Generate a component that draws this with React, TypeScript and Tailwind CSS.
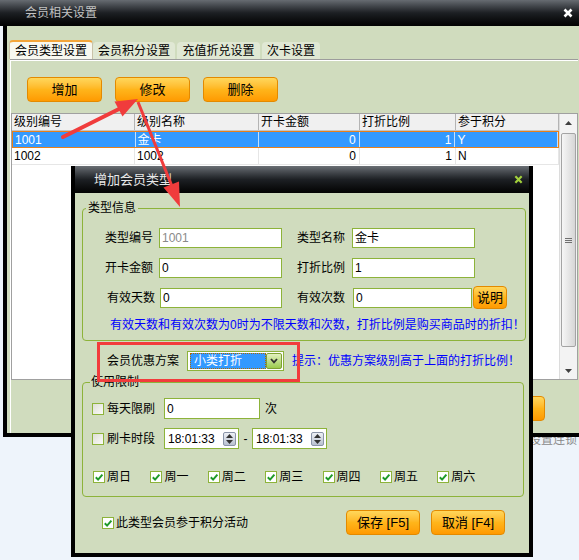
import React from 'react';

type Kids = { children?: React.ReactNode; className?: string };

function OrangeBtn({ children, className = '' }: Kids) {
  return (
    <button
      className={`flex shrink-0 items-center justify-center rounded-[4px] border border-[#e38a00] bg-linear-to-b from-[#ffd75a] via-[#ffb51a] to-[#ff9a00] text-[13px] leading-none text-black ${className}`}
    >
      {children}
    </button>
  );
}

function Check({ checked = false }: { checked?: boolean }) {
  return (
    <span
      className={`flex h-[12px] w-[12px] shrink-0 items-center justify-center border border-[#8db33a] ${
        checked ? 'bg-white' : 'bg-linear-to-br from-[#dedfd6] to-[#fbfbf8]'
      }`}
    >
      {checked && (
        <svg viewBox="0 0 10 10" className="h-[10px] w-[10px]">
          <path d="M1.8 5.2 L4.1 7.6 L8.4 2.6" fill="none" stroke="#1f9a2a" strokeWidth="2" />
        </svg>
      )}
    </span>
  );
}

function Field({ value, className = '', muted = false }: { value: string; className?: string; muted?: boolean }) {
  return (
    <div
      className={`flex h-[20px] shrink-0 items-center border border-[#8db33a] bg-white pl-[2px] text-[12px] ${
        muted ? 'text-[#8a8a8a]' : 'text-black'
      } ${className}`}
    >
      {value}
    </div>
  );
}

function TimeField({ value }: { value: string }) {
  return (
    <div className="flex h-[21px] w-[75px] shrink-0 items-center justify-between border border-[#8db33a] bg-white pl-[3px] pr-[2px] text-[12px]">
      <span>{value}</span>
      <span className="flex h-[14px] w-[13px] flex-col items-center justify-center gap-[2px] rounded-[2px] border border-[#8a94a8] bg-linear-to-b from-[#eef1f6] to-[#b9c1d0]">
        <svg viewBox="0 0 7 4" className="h-[4px] w-[7px]">
          <path d="M0 4 L3.5 0 L7 4 Z" fill="#333" />
        </svg>
        <svg viewBox="0 0 7 4" className="h-[4px] w-[7px]">
          <path d="M0 0 L7 0 L3.5 4 Z" fill="#333" />
        </svg>
      </span>
    </div>
  );
}

const columns = [
  { title: '级别编号', w: 'w-[123px]', right: false },
  { title: '级别名称', w: 'w-[124px]', right: false },
  { title: '开卡金额', w: 'w-[101px]', right: true },
  { title: '打折比例', w: 'w-[96px]', right: true },
  { title: '参于积分', w: 'w-[103px]', right: false },
];

const rows = [
  ['1001', '金卡', '0', '1', 'Y'],
  ['1002', '1002', '0', '1', 'N'],
];

const days = ['周日', '周一', '周二', '周三', '周四', '周五', '周六'];

function Grid() {
  return (
    <div className="flex h-[267px] w-[567px] border border-[#a0a0a0] bg-white">
      <div className="flex w-[547px] flex-col">
        <div className="flex h-[17px] border-b border-[#c4c4c4] bg-[#f0f0f0]">
          {columns.map((c) => (
            <div key={c.title} className={`${c.w} flex items-center border-r border-[#b4b4b4] pl-[2px]`}>
              {c.title}
            </div>
          ))}
        </div>
        {rows.map((r, i) => (
          <div
            key={r[0]}
            className={`flex h-[17px] ${
              i === 0 ? 'border border-[#e8801a] bg-[#3399ff] text-white' : 'border-b border-[#e6e6e6] text-black'
            }`}
          >
            {columns.map((c, j) => (
              <div
                key={c.title}
                className={`${c.w} flex items-center border-r ${i === 0 ? 'border-white/70' : 'border-[#e6e6e6]'} ${
                  c.right ? 'justify-end pr-[3px]' : 'pl-[2px]'
                }`}
              >
                {r[j]}
              </div>
            ))}
          </div>
        ))}
      </div>
      <div className="flex w-[18px] flex-col border-l border-[#dcdcdc] bg-[#f3f3f3]">
        <div className="flex h-[17px] items-center justify-center">
          <svg viewBox="0 0 7 4" className="h-[4px] w-[7px]">
            <path d="M0 4 L3.5 0 L7 4 Z" fill="#404040" />
          </svg>
        </div>
        <div className="mx-[1px] mt-[2px] flex h-[214px] items-center justify-center rounded-[2px] border border-[#a4a4a4] bg-linear-to-r from-[#f6f6f6] to-[#d6d6d6]">
          <div className="flex flex-col gap-[1px]">
            <span className="h-px w-[7px] bg-[#707070]" />
            <span className="h-px w-[7px] bg-[#707070]" />
            <span className="h-px w-[7px] bg-[#707070]" />
          </div>
        </div>
        <div className="flex-1" />
        <div className="flex h-[17px] items-center justify-center">
          <svg viewBox="0 0 7 4" className="h-[4px] w-[7px]">
            <path d="M0 0 L7 0 L3.5 4 Z" fill="#404040" />
          </svg>
        </div>
      </div>
    </div>
  );
}

function MainWindow() {
  return (
    <div className="relative flex h-[437px] w-[620px] flex-col">
      <div className="flex h-[26px] shrink-0 items-center bg-linear-to-b from-[#676c72] via-[#1c1f23] to-[#030303] pl-[25px]">
        <span className="text-[12px] text-[#c2c2c2]">会员相关设置</span>
        <svg viewBox="0 0 10 10" className="ml-auto mr-[47px] h-[10px] w-[10px]">
          <path d="M1.5 1.5 L8.5 8.5 M8.5 1.5 L1.5 8.5" stroke="white" strokeWidth="2.6" />
        </svg>
      </div>
      <div className="ml-[3px] flex flex-1 flex-col border-b-4 border-l-4 border-black bg-[#d0dcbe] pl-[2px] pt-[14px]">
        <div className="flex h-[19px] items-end">
          <div className="flex h-[19px] w-[84px] items-center justify-center rounded-t-[4px] border-x border-t-2 border-x-[#c9c2a8] border-t-[#f3a53a] bg-[#f8f8f0]">
            会员类型设置
          </div>
          <div className="flex h-[17px] w-[82px] items-center justify-center rounded-t-[4px] bg-[#e0e8d4]">会员积分设置</div>
          <div className="ml-[2px] flex h-[17px] w-[83px] items-center justify-center rounded-t-[4px] bg-[#e0e8d4]">充值折兑设置</div>
          <div className="ml-[2px] flex h-[17px] w-[58px] items-center justify-center rounded-t-[4px] bg-[#e0e8d4]">次卡设置</div>
        </div>
        <div className="ml-[1px] w-[568px] flex-1 border-t border-[#9c9c9c]">
          <div className="flex h-full flex-col border-l border-t border-white pl-[16px] pt-[16px]">
            <div className="flex gap-[13px]">
              <OrangeBtn className="h-[25px] w-[75px]">增加</OrangeBtn>
              <OrangeBtn className="h-[25px] w-[75px]">修改</OrangeBtn>
              <OrangeBtn className="h-[25px] w-[75px]">删除</OrangeBtn>
            </div>
            <div className="-ml-[16px] mt-[11px]">
              <Grid />
            </div>
            <OrangeBtn className="ml-[443px] mt-[16px] h-[25px] w-[75px]">关闭</OrangeBtn>
          </div>
        </div>
      </div>
    </div>
  );
}

function Dialog() {
  return (
    <div className="absolute left-[71px] top-[166px] flex h-[391px] w-[462px] flex-col border-x-4 border-b-4 border-black bg-[#d0dcbe]">
      <div className="flex h-[27px] shrink-0 items-center bg-linear-to-b from-[#6a6f75] via-[#1d2024] to-[#040404] pl-[19px]">
        <span className="text-[13px] text-[#e8e8e8]">增加会员类型</span>
        <svg viewBox="0 0 10 10" className="ml-auto mr-[6px] h-[9px] w-[9px]">
          <path d="M1.5 1.5 L8.5 8.5 M8.5 1.5 L1.5 8.5" stroke="#a3d13c" strokeWidth="2.4" />
        </svg>
      </div>

      <fieldset className="ml-[7px] mt-[8px] w-[442px] rounded-[4px] border border-[#8db33a] pb-[8px] pt-[13px]">
        <legend className="ml-[3px] px-[2px] text-[12px] leading-[14px]">类型信息</legend>
        <div className="flex h-[20px] items-center">
          <span className="w-[70px] text-right">类型编号</span>
          <Field value="1001" muted className="ml-[6px] w-[123px]" />
          <span className="ml-[15px] w-[48px]">类型名称</span>
          <Field value="金卡" className="ml-[7px] w-[123px]" />
        </div>
        <div className="mt-[10px] flex h-[20px] items-center">
          <span className="w-[70px] text-right">开卡金额</span>
          <Field value="0" className="ml-[6px] w-[123px]" />
          <span className="ml-[15px] w-[48px]">打折比例</span>
          <Field value="1" className="ml-[7px] w-[123px]" />
        </div>
        <div className="mt-[8px] flex h-[23px] items-center">
          <span className="w-[72px] text-right">有效天数</span>
          <Field value="0" className="ml-[5px] w-[122px]" />
          <span className="ml-[15px] w-[48px]">有效次数</span>
          <Field value="0" className="ml-[8px] w-[119px]" />
          <OrangeBtn className="ml-[1px] h-[23px] w-[34px]">说明</OrangeBtn>
        </div>
        <p className="mt-[9px] whitespace-nowrap pl-[27px] leading-[14px] text-[#0000ff]">
          有效天数和有效次数为0时为不限天数和次数，打折比例是购买商品时的折扣！
        </p>
      </fieldset>

      <div className="ml-[32px] mt-[10px] flex h-[20px] items-center">
        <span className="w-[72px]">会员优惠方案</span>
        <div className="ml-[8px] flex h-[20px] w-[97px] items-center border border-[#8db33a] bg-white pl-[2px] pr-px">
          <span className="flex h-[16px] w-[76px] items-center border border-dotted border-[#b06a00] bg-[#3399ff] pl-[3px] text-white">
            小类打折
          </span>
          <span className="ml-auto flex h-[16px] w-[16px] items-center justify-center rounded-[2px] border border-[#7ea133] bg-linear-to-b from-[#e2f1bd] to-[#9ccb4c]">
            <svg viewBox="0 0 8 6" className="h-[6px] w-[8px]">
              <path d="M1 1 L4 4.4 L7 1" fill="none" stroke="#303030" strokeWidth="1.8" />
            </svg>
          </span>
        </div>
        <span className="ml-[8px] whitespace-nowrap text-[#0000ff]">提示：优惠方案级别高于上面的打折比例！</span>
      </div>

      <fieldset className="ml-[7px] mt-[4px] w-[442px] rounded-[4px] border border-[#8db33a] pb-[12px] pl-[9px] pt-[9px]">
        <legend className="ml-[-2px] px-[1px] text-[12px] leading-[14px]">使用限制</legend>
        <div className="flex h-[21px] items-center">
          <Check />
          <span className="ml-[3px] w-[48px]">每天限刷</span>
          <Field value="0" className="ml-[9px] h-[21px] w-[96px]" />
          <span className="ml-[5px]">次</span>
        </div>
        <div className="mt-[9px] flex h-[21px] items-center">
          <Check />
          <span className="ml-[3px] w-[48px]">刷卡时段</span>
          <div className="ml-[9px]">
            <TimeField value="18:01:33" />
          </div>
          <span className="w-[13px] text-center">-</span>
          <TimeField value="18:01:33" />
        </div>
        <div className="ml-px mt-[21px] flex h-[14px] items-center">
          {days.map((d) => (
            <div key={d} className="flex w-[57.4px] shrink-0 items-center gap-[2px]">
              <Check checked />
              <span>{d}</span>
            </div>
          ))}
        </div>
      </fieldset>

      <div className="mt-[13px] flex h-[25px] items-center pl-[27px] pr-[24px]">
        <Check checked />
        <span className="ml-[2px]">此类型会员参于积分活动</span>
        <div className="ml-auto flex gap-[11px]">
          <OrangeBtn className="h-[25px] w-[74px]">保存 [F5]</OrangeBtn>
          <OrangeBtn className="h-[25px] w-[74px]">取消 [F4]</OrangeBtn>
        </div>
      </div>
    </div>
  );
}

function Arrows() {
  return (
    <svg className="pointer-events-none absolute left-0 top-0 h-[560px] w-[579px]" viewBox="0 0 579 560">
      <path d="M63 137 L119 109" stroke="#f03c3c" strokeWidth="4" strokeLinecap="round" />
      <polygon points="138,99 122.5,116.5 114.5,101.5" fill="#f03c3c" />
      <path d="M138 102 L171.5 185" stroke="#f03c3c" strokeWidth="3" />
      <polygon points="180,207 179,181.5 163.5,187.5" fill="#f03c3c" />
    </svg>
  );
}

export default function App() {
  return (
    <div className="relative h-[560px] w-[579px] overflow-hidden bg-[#eef4fb] font-['Liberation_Sans','Noto_Sans_CJK_SC',sans-serif] text-[12px] leading-none text-black">
      <div className="absolute left-[529px] top-[434px] whitespace-nowrap text-[12px] text-[#8a8a8a]">设置连锁</div>
      <MainWindow />
      <Dialog />
      <div className="pointer-events-none absolute left-[97px] top-[342px] h-[40px] w-[203px] border-[3px] border-[#f23c3c]" />
      <Arrows />
    </div>
  );
}
